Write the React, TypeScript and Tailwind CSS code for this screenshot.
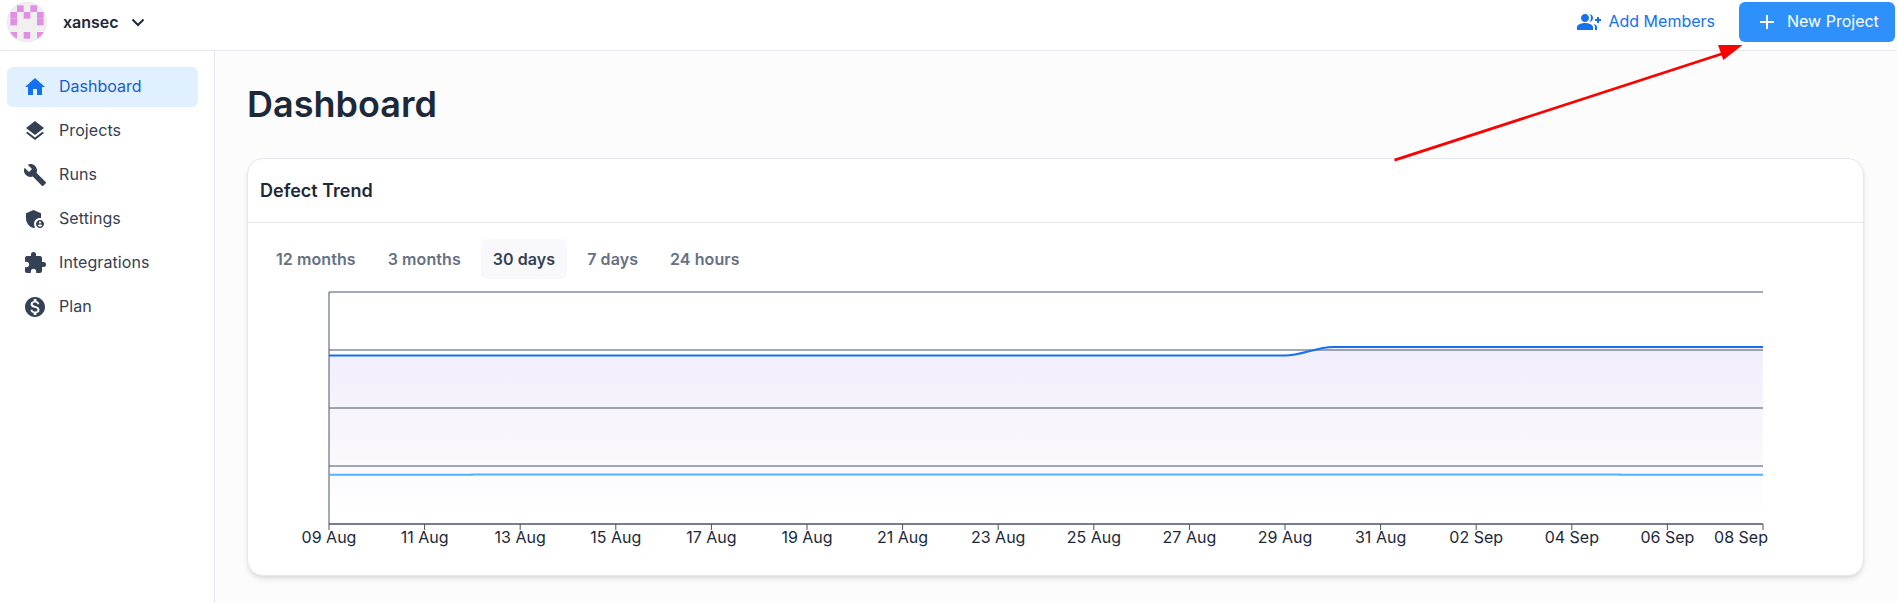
import React from "react";
import {
  MdAdd,
  MdAdminPanelSettings,
  MdBuild,
  MdExtension,
  MdGroupAdd,
  MdHome,
  MdLayers,
  MdMonetizationOn,
} from "react-icons/md";

const NAV = [
  { label: "Dashboard", Icon: MdHome, active: true },
  { label: "Projects", Icon: MdLayers },
  { label: "Runs", Icon: MdBuild },
  { label: "Settings", Icon: MdAdminPanelSettings },
  { label: "Integrations", Icon: MdExtension },
  { label: "Plan", Icon: MdMonetizationOn },
];

const RANGES = ["12 months", "3 months", "30 days", "7 days", "24 hours"];

const TICKS = [
  "09 Aug", "11 Aug", "13 Aug", "15 Aug", "17 Aug", "19 Aug", "21 Aug", "23 Aug",
  "25 Aug", "27 Aug", "29 Aug", "31 Aug", "02 Sep", "04 Sep", "06 Sep", "08 Sep",
];

const AVATAR_CELLS = [
  [1, 0], [3, 0], [0, 1], [2, 1], [4, 1], [0, 2], [4, 2], [0, 4], [2, 4], [4, 4],
];

function Avatar() {
  return (
    <svg className="size-10 rounded-full" viewBox="0 0 420 420" aria-hidden="true">
      <rect width="420" height="420" fill="#f0f0f0" />
      <g fill="#e28ee2">
        {AVATAR_CELLS.map(([c, r]) => (
          <rect key={`${c}-${r}`} x={35 + c * 70} y={35 + r * 70} width="70" height="70" />
        ))}
      </g>
      <circle cx="210" cy="210" r="206" fill="none" stroke="#e2e2e2" strokeWidth="7" />
    </svg>
  );
}

const LEFT = 65;
const WIDTH = 1434;
const STEP = WIDTH / 30;

function TrendChart() {
  const a = LEFT + 20 * STEP;
  const b = LEFT + 21 * STEP;
  const right = LEFT + WIDTH;
  const main = `M${LEFT},68.6H${a}C${a + STEP / 3},68.6 ${b - STEP / 3},60 ${b},60H${right}`;
  const c = LEFT + 3 * STEP;
  const d = LEFT + 27 * STEP;
  const low = `M${LEFT},187.8H${c}V187.5H${d}V187.8H${right}`;
  return (
    <svg className="block h-[265px] w-[1583px]" viewBox="0 0 1583 265" overflow="visible">
      <defs>
        <linearGradient id="trend" x1="0" y1="0" x2="0" y2="1">
          <stop offset="5%" stopColor="#f2eefb" />
          <stop offset="95%" stopColor="#ffffff" />
        </linearGradient>
      </defs>
      <path d={`${main}V237H${LEFT}Z`} fill="url(#trend)" />
      <g stroke="#475467">
        {[5, 63, 121, 179, 237].map((y) => (
          <line key={y} x1={LEFT} x2={right} y1={y} y2={y} />
        ))}
        <line x1={LEFT} x2={right} y1="237" y2="237" />
        <line x1={LEFT} x2={LEFT} y1="5" y2="237" />
        {TICKS.map((t, i) => (
          <line key={t} x1={LEFT + i * 2 * STEP} x2={LEFT + i * 2 * STEP} y1="237" y2="243" />
        ))}
      </g>
      <path d={low} fill="none" stroke="#53b1fd" strokeWidth="2" />
      <path d={main} fill="none" stroke="#1570ef" strokeWidth="2" />
      <g fill="#1d2939" fontSize="16">
        {TICKS.map((t, i) => (
          <text
            key={t}
            x={i === 15 ? right + 5 : LEFT + i * 2 * STEP}
            y="256"
            textAnchor={i === 15 ? "end" : "middle"}
          >
            {t}
          </text>
        ))}
      </g>
    </svg>
  );
}

export default function App() {
  return (
    <div className="relative flex h-[603px] w-[1897px] flex-col overflow-hidden bg-white font-['Inter',sans-serif] text-base text-[#344054]">
      <header className="flex h-[51px] shrink-0 items-start justify-between border-b border-[#e7e8ef] pt-0.5 pr-0.5 pl-[7px]">
        <div className="flex h-10 items-center">
          <Avatar />
          <span className="ml-4 font-semibold text-[#1d2939]">xansec</span>
          <svg className="ml-[7px] size-6" viewBox="0 0 24 24" fill="none" stroke="#1d2939" strokeWidth="2">
            <path d="M6.5 9.5 12 15l5.5-5.5" />
          </svg>
        </div>
        <div className="flex h-10 items-center">
          <button className="mr-6 flex items-center gap-[7px] text-[#1570ef]">
            <MdGroupAdd className="size-6" />
            <span className="pb-0.5">Add Members</span>
          </button>
          <button className="flex h-10 w-[156px] items-center gap-2 rounded-md bg-[#2e90fa] pl-4 whitespace-nowrap text-white">
            <MdAdd className="size-6 shrink-0" />
            <span className="pb-0.5">New Project</span>
          </button>
        </div>
      </header>
      <div className="flex min-h-0 flex-1">
        <aside className="w-[215px] shrink-0 border-r border-[#e7e8ef] pt-4 pl-[7px]">
          <nav className="flex w-[191px] flex-col gap-1">
            {NAV.map(({ label, Icon, active }) => (
              <a
                key={label}
                className={
                  active
                    ? "flex h-10 items-center gap-3 rounded-md bg-[#e0f0fe] pl-4 text-[#175cd3]"
                    : "flex h-10 items-center gap-3 rounded-md pl-4 tracking-[0.08px]"
                }
              >
                <Icon className={active ? "size-6 text-[#1570ef]" : "size-6"} />
                <span className="pb-0.5">{label}</span>
              </a>
            ))}
          </nav>
        </aside>
        <main className="flex-1 border-r border-[#e7e8ef] bg-[#fcfcfc] pt-[31px] pr-[33px] pl-8">
          <h1 className="text-4xl leading-[44px] font-semibold text-[#1d2939]">Dashboard</h1>
          <section className="mt-8 h-[418px] rounded-2xl border border-[#e7e8ef] bg-white shadow-md">
            <h2 className="flex h-16 items-center border-b border-[#e7e8ef] pl-3 text-lg font-semibold text-[#1d2939]">
              Defect Trend
            </h2>
            <div className="px-4 pt-4">
              <div className="flex gap-2">
                {RANGES.map((r) => (
                  <button
                    key={r}
                    className={
                      r === "30 days"
                        ? "h-10 rounded-md bg-[#f9f9fb] px-3 font-semibold tracking-[0.08px] text-[#344054]"
                        : "h-10 rounded-md px-3 font-semibold tracking-[0.08px] text-[#667085]"
                    }
                  >
                    {r}
                  </button>
                ))}
              </div>
              <div className="mt-2">
                <TrendChart />
              </div>
            </div>
          </section>
        </main>
      </div>
      <svg className="pointer-events-none absolute top-0 left-[1380px] h-[170px] w-[380px]" viewBox="1380 0 380 170">
        <path d="M1394.5 160.2 1726 52.5" stroke="#ff0000" strokeWidth="2.8" />
        <path d="M1742.5 45H1718l5.3 15Z" fill="#ff0000" />
      </svg>
    </div>
  );
}
